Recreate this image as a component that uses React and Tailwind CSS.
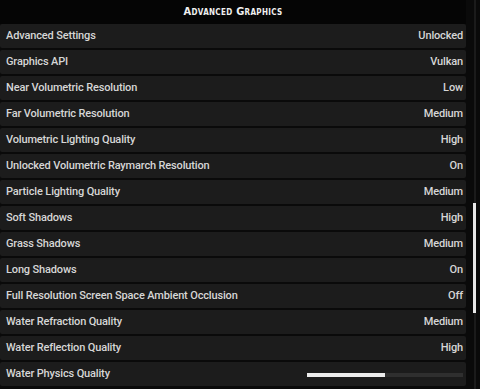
const settings = [
  { label: "Advanced Settings", value: "Unlocked" },
  { label: "Graphics API", value: "Vulkan" },
  { label: "Near Volumetric Resolution", value: "Low" },
  { label: "Far Volumetric Resolution", value: "Medium" },
  { label: "Volumetric Lighting Quality", value: "High" },
  { label: "Unlocked Volumetric Raymarch Resolution", value: "On" },
  { label: "Particle Lighting Quality", value: "Medium" },
  { label: "Soft Shadows", value: "High" },
  { label: "Grass Shadows", value: "Medium" },
  { label: "Long Shadows", value: "On" },
  { label: "Full Resolution Screen Space Ambient Occlusion", value: "Off" },
  { label: "Water Refraction Quality", value: "Medium" },
  { label: "Water Reflection Quality", value: "High" },
  { label: "Water Physics Quality", slider: 50 },
];

const Row = ({ label, value, slider }) => (
  <div className="h-6 flex items-center justify-between pl-[6px] pr-[3px] pt-[1px] bg-[#1c1c1c] rounded-[2px]">
    <span>{label}</span>
    {slider !== undefined ? (
      <div className="w-[156px] h-[4px] bg-[#2f2f2f]">
        <div className="h-full bg-[#ececec]" style={{ width: `${slider}%` }} />
      </div>
    ) : (
      <span>{value}</span>
    )}
  </div>
);

export default function App() {
  return (
    <div className="w-[480px] h-[389px] bg-[#0a0a0a] flex overflow-hidden font-['Roboto',sans-serif] text-[11px] font-medium text-[#d6d6d6] tracking-[-0.15px]">
      <div className="w-[466px] flex flex-col">
        <div className="h-6 flex items-center justify-center bg-[#050505]">
          <span className="font-['DejaVu_Sans_Condensed',sans-serif] [font-variant:small-caps] text-[11px] font-bold text-[#f0f0f0] tracking-[0.3px]">
            Advanced Graphics
          </span>
        </div>
        <div className="flex flex-col gap-[2px]">
          {settings.map((s) => (
            <Row key={s.label} {...s} />
          ))}
        </div>
      </div>
      <div className="ml-[7px] w-[3px] relative">
        <div className="absolute left-[1px] top-0 bottom-0 w-[2px] bg-[#1b1b1b]" />
        <div className="absolute left-0 top-[203px] h-[110px] w-[3px] bg-[#e8e8e8]" />
      </div>
    </div>
  );
}
